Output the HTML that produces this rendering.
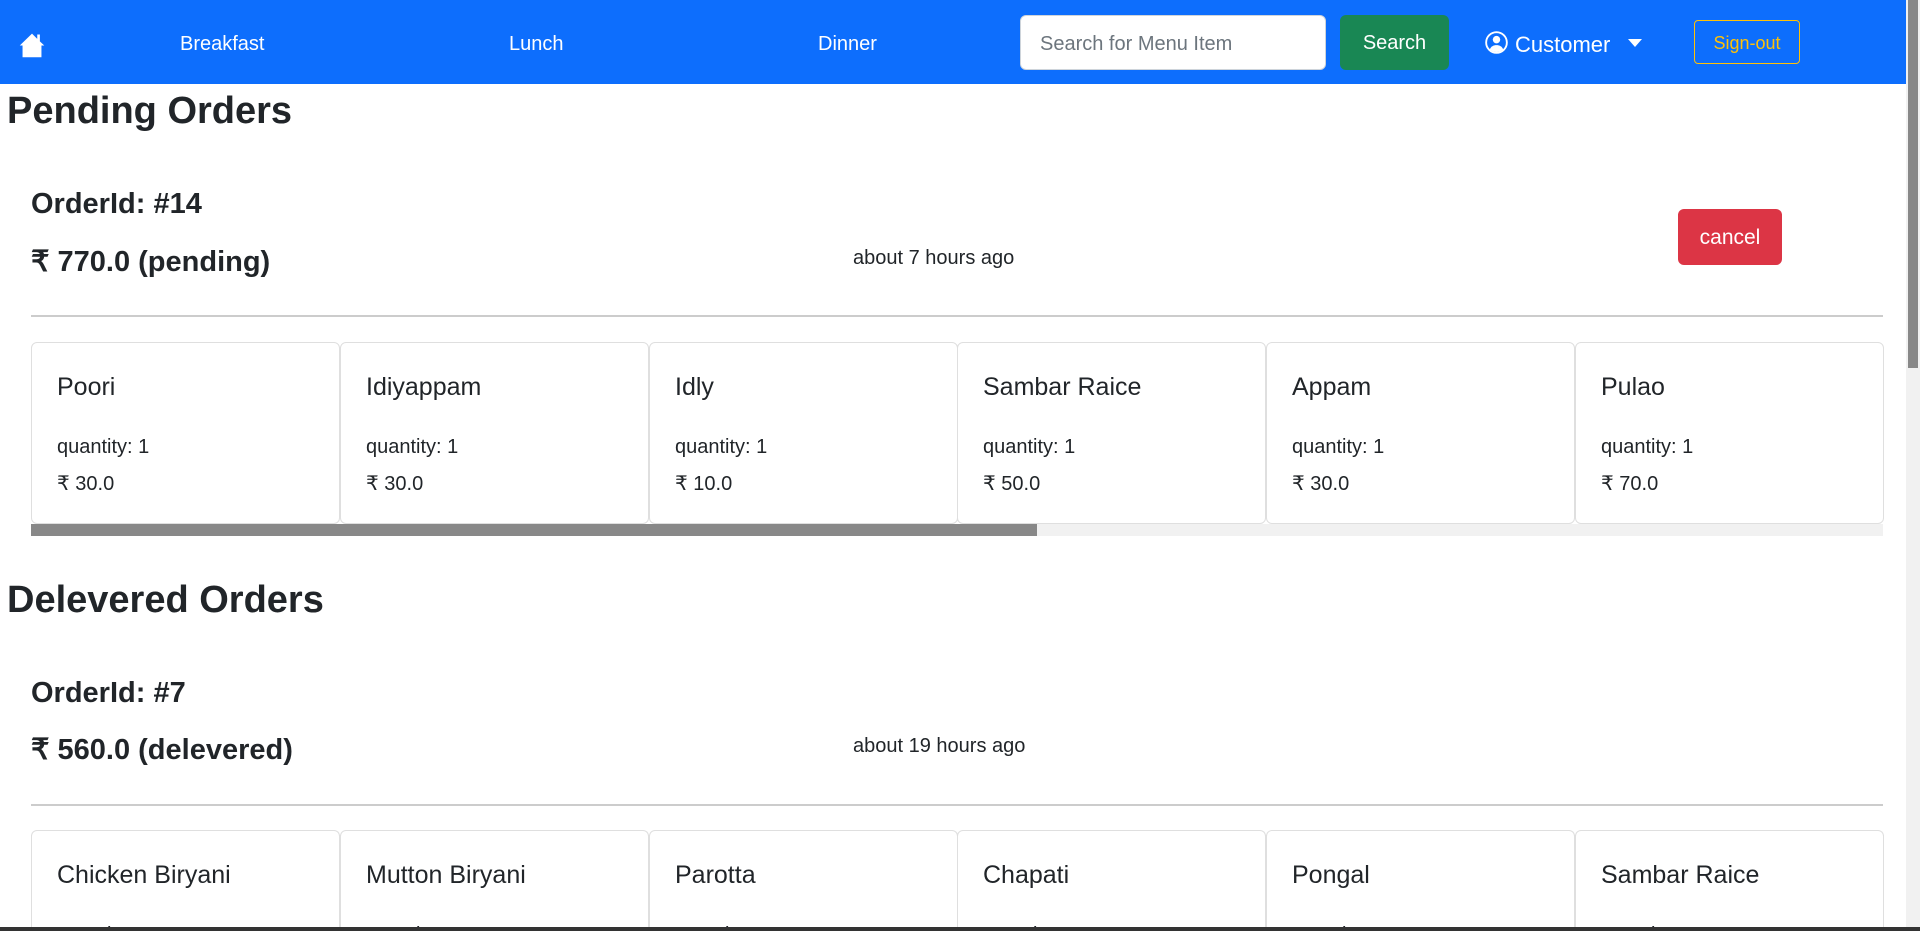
<!DOCTYPE html>
<html><head><meta charset="utf-8"><style>
*{margin:0;padding:0;box-sizing:border-box}
html,body{width:1920px;height:931px;overflow:hidden}
body{background:#fff;font-family:"Liberation Sans",sans-serif;color:#212529}
#w{position:relative;width:1920px;height:931px;overflow:hidden}
.a{position:absolute;white-space:nowrap}
.nav{position:absolute;left:0;top:0;width:1906px;height:84px;background:#0d6efd}
.nl{color:#fff;font-size:20px;top:33px}
.h2{font-size:38px;font-weight:bold;left:7px}
.h4{font-size:29px;font-weight:bold;left:31px}
.ago{font-size:20px;left:853px}
.hr{position:absolute;left:31px;width:1852px;height:2px;background:#ccc}
.card{position:absolute;width:309px;height:182px;border:1px solid #dfdfdf;border-radius:6px;background:#fff;overflow:hidden}
.card .t{position:absolute;left:25px;top:30px;font-size:25px}
.card .q{position:absolute;left:25px;top:93px;font-size:20px}
.card .p{position:absolute;left:25px;top:128px;font-size:20px}
.b .card{height:101px;border-bottom:none;border-radius:6px 6px 0 0}
</style></head><body><div id="w">
<div class="nav"></div>
<svg class="a" style="left:17px;top:31px" width="30" height="28" viewBox="0 0 16 16"><path d="M8 1.5 1 8.3h1.6V15h10.8V8.3H15L12.5 5.9V2h-1.5v2.5z" fill="#fff"/></svg>
<div class="a nl" style="left:180px">Breakfast</div>
<div class="a nl" style="left:509px">Lunch</div>
<div class="a nl" style="left:818px">Dinner</div>
<div class="a" style="left:1020px;top:15px;width:306px;height:55px;background:#fff;border:1px solid #ced4da;border-radius:6px"></div>
<div class="a" style="left:1040px;top:33px;font-size:20px;color:#6c757d">Search for Menu Item</div>
<div class="a" style="left:1340px;top:15px;width:109px;height:55px;background:#198754;border-radius:6px;color:#fff;font-size:20px;text-align:center;line-height:57px">Search</div>
<svg class="a" style="left:1485px;top:31px" width="23" height="23" viewBox="0 0 16 16"><circle cx="8" cy="8" r="7.2" fill="none" stroke="#fff" stroke-width="1.3"/><circle cx="8" cy="6" r="2.6" fill="#fff"/><path d="M3.3 12.8C4.3 10.6 6 9.8 8 9.8s3.7.8 4.7 3A7 7 0 0 1 3.3 12.8z" fill="#fff"/></svg>
<div class="a nl" style="left:1515px;top:32px;font-size:22px">Customer</div>
<div class="a" style="left:1628px;top:39px;width:0;height:0;border-left:7px solid transparent;border-right:7px solid transparent;border-top:8px solid #fff"></div>
<div class="a" style="left:1694px;top:20px;width:106px;height:44px;border:1px solid #ffc107;border-radius:4px;color:#ffc107;font-size:18px;text-align:center;line-height:44px">Sign-out</div>
<div class="a" style="left:1906px;top:0;width:14px;height:931px;background:#f1f1f1"></div>
<div class="a" style="left:1908px;top:0;width:10px;height:368px;background:#888"></div>

<div class="a h2" style="top:90px">Pending Orders</div>
<div class="a h4" style="top:188px">OrderId: #14</div>
<div class="a h4" style="top:244px">₹ 770.0 (pending)</div>
<div class="a ago" style="top:247px">about 7 hours ago</div>
<div class="a" style="left:1678px;top:209px;width:104px;height:56px;background:#dc3545;border-radius:6px;color:#fff;font-size:21px;text-align:center;line-height:58px">cancel</div>
<div class="hr" style="top:315px"></div>
<div class="card" style="left:31px;top:342px"><div class="t">Poori</div><div class="q">quantity: 1</div><div class="p">₹ 30.0</div></div>
<div class="card" style="left:340px;top:342px"><div class="t">Idiyappam</div><div class="q">quantity: 1</div><div class="p">₹ 30.0</div></div>
<div class="card" style="left:649px;top:342px"><div class="t">Idly</div><div class="q">quantity: 1</div><div class="p">₹ 10.0</div></div>
<div class="card" style="left:957px;top:342px"><div class="t">Sambar Raice</div><div class="q">quantity: 1</div><div class="p">₹ 50.0</div></div>
<div class="card" style="left:1266px;top:342px"><div class="t">Appam</div><div class="q">quantity: 1</div><div class="p">₹ 30.0</div></div>
<div class="card" style="left:1575px;top:342px"><div class="t">Pulao</div><div class="q">quantity: 1</div><div class="p">₹ 70.0</div></div>
<div class="a" style="left:31px;top:524px;width:1852px;height:12px;background:#f1f1f1"></div>
<div class="a" style="left:31px;top:524px;width:1006px;height:12px;background:#888"></div>

<div class="a h2" style="top:579px">Delevered Orders</div>
<div class="a h4" style="top:677px">OrderId: #7</div>
<div class="a h4" style="top:732px">₹ 560.0 (delevered)</div>
<div class="a ago" style="top:735px">about 19 hours ago</div>
<div class="hr" style="top:804px"></div>
<div class="b">
<div class="card" style="left:31px;top:830px"><div class="t">Chicken Biryani</div><div class="q">quantity: 1</div></div>
<div class="card" style="left:340px;top:830px"><div class="t">Mutton Biryani</div><div class="q">quantity: 1</div></div>
<div class="card" style="left:649px;top:830px"><div class="t">Parotta</div><div class="q">quantity: 1</div></div>
<div class="card" style="left:957px;top:830px"><div class="t">Chapati</div><div class="q">quantity: 1</div></div>
<div class="card" style="left:1266px;top:830px"><div class="t">Pongal</div><div class="q">quantity: 1</div></div>
<div class="card" style="left:1575px;top:830px"><div class="t">Sambar Raice</div><div class="q">quantity: 1</div></div>
</div>
<div class="a" style="left:0;top:927px;width:1920px;height:4px;background:#333"></div>
</div></body></html>
